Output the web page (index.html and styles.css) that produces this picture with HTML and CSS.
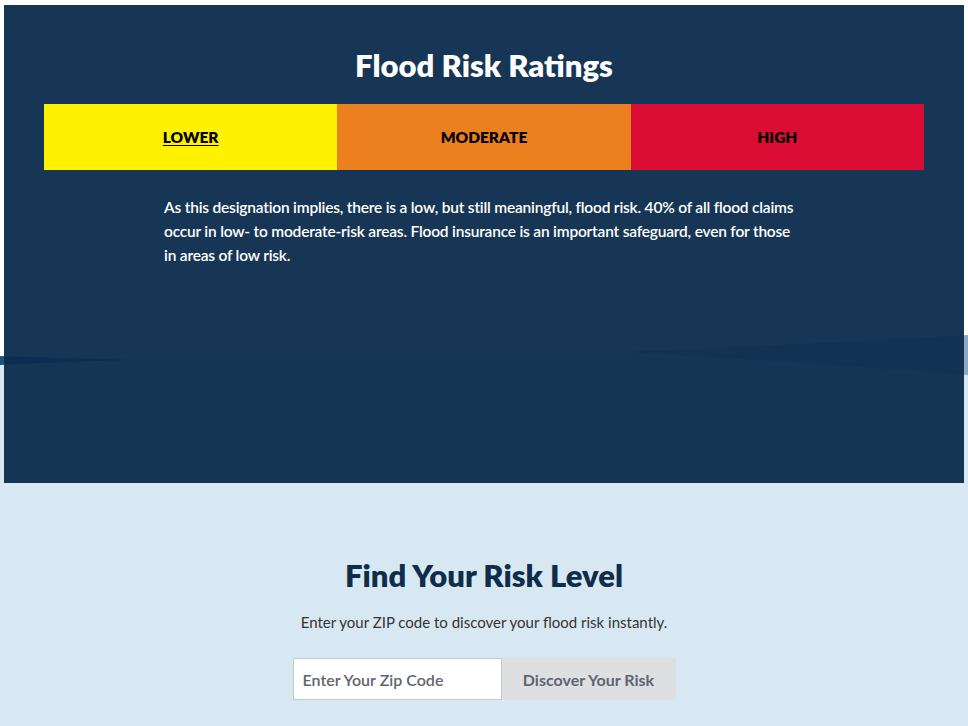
FILE: index.html
```html
<!doctype html>
<html>

<head>
    <meta name="viewport" content="width=device-width,initial-scale=1.0">
    <meta charset="utf-8" />
    <title>Flood Risk Ratings</title>
    <link rel="stylesheet" href="styles.css">
</head>

<body>
    <section class="ratings">
        <svg class="ratings__wave" viewBox="0 0 968 50" preserveAspectRatio="none" aria-hidden="true">
            <path d="M0 26 C40 27 90 29 130 30 C90 31 40 33 0 35 Z" fill="#1e5080" />
            <path d="M968 5 C850 12 720 18 620 22 C720 27 850 36 968 45 Z" fill="#8aa9c3" />
        </svg>
        <div class="ratings__box">
            <h2 class="ratings__title">Flood Risk Ratings</h2>
            <div class="ratings__bar">
                <a class="ratings__level ratings__level--lower is-active" href="#">LOWER</a>
                <a class="ratings__level ratings__level--moderate" href="#">MODERATE</a>
                <a class="ratings__level ratings__level--high" href="#">HIGH</a>
            </div>
            <p class="ratings__text">As this designation implies, there is a low, but still meaningful, flood risk. 40% of all flood claims occur in low- to moderate-risk areas. Flood insurance is an important safeguard, even for those in areas of low risk.</p>
        </div>
    </section>

    <section class="finder">
        <h2 class="finder__title">Find Your Risk Level</h2>
        <p class="finder__text">Enter your ZIP code to discover your flood risk instantly.</p>
        <form class="finder__form" onsubmit="return false">
            <input class="finder__input" type="text" placeholder="Enter Your Zip Code">
            <button class="finder__btn" type="submit">Discover Your Risk</button>
        </form>
    </section>
</body>

</html>
```

FILE: styles.css
```css
body {
    margin: 0;
    background: #d8e8f3;
    font-family: Lato, "Open Sans", sans-serif;
}

.ratings {
    position: relative;
    padding: 5px 4px 0;
    background: linear-gradient(#fff 0, #fff 358px, #d8e8f3 358px);
}

.ratings__wave {
    position: absolute;
    top: 330px;
    left: 0;
    width: 100%;
    height: 50px;
}

.ratings__box {
    position: relative;
    height: 478px;
    box-sizing: border-box;
    padding: 42px 40px 0;
    background: rgba(11, 43, 76, 0.95);
    color: #fff;
}

.ratings__title {
    margin: 0;
    font-size: 31px;
    line-height: 36px;
    font-weight: 800;
    text-align: center;
}

.ratings__bar {
    display: flex;
    margin-top: 21px;
    height: 66px;
}

.ratings__level {
    flex: 1;
    display: flex;
    align-items: center;
    justify-content: center;
    color: #000;
    font-size: 15.5px;
    font-weight: 800;
    text-decoration: none;
}

.ratings__level.is-active {
    text-decoration: underline;
    text-underline-offset: 2px;
}

.ratings__level--lower {
    background: #fff200;
}

.ratings__level--moderate {
    background: #ec7f1e;
}

.ratings__level--high {
    background: #dc0d35;
}

.ratings__text {
    max-width: 640px;
    margin: 25px auto 0;
    font-size: 15.5px;
    line-height: 24px;
    font-weight: 600;
    letter-spacing: -0.2px;
}

.finder {
    padding: 74px 0 40px;
    text-align: center;
}

.finder__title {
    margin: 0;
    color: #0e2d4b;
    font-size: 31px;
    line-height: 36px;
    font-weight: 800;
}

.finder__text {
    margin: 17px 0 0;
    color: #333;
    font-size: 15px;
    line-height: 24px;
}

.finder__form {
    display: flex;
    justify-content: center;
    margin-top: 24px;
}

.finder__input {
    width: 209px;
    height: 42px;
    box-sizing: border-box;
    padding: 0 9px;
    border: 1px solid #c6c9cc;
    border-radius: 0;
    background: #fff;
    font-family: inherit;
    font-size: 16px;
    font-weight: 600;
    color: #333;
}

.finder__input::placeholder {
    color: #5f6670;
}

.finder__btn {
    width: 174px;
    height: 42px;
    border: 0;
    background: #dedfe1;
    color: #5e6572;
    font-family: inherit;
    font-size: 16px;
    font-weight: 700;
}
```
